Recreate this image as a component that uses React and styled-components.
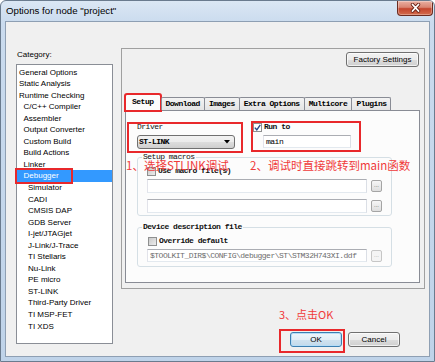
import React from 'react';
import styled, { createGlobalStyle } from 'styled-components';

const ui = `'Liberation Sans', Arial, sans-serif`;
const mono = `'Liberation Mono', 'Courier New', monospace`;
const cjk = `'Noto Sans CJK SC', 'Noto Sans', sans-serif`;

const GlobalStyle = createGlobalStyle`
  body { margin: 0; background: #fff; }
  * { box-sizing: border-box; }
`;

const categories = [
  ['General Options', 0], ['Static Analysis', 0], ['Runtime Checking', 0],
  ['C/C++ Compiler', 1], ['Assembler', 1], ['Output Converter', 1], ['Custom Build', 1],
  ['Build Actions', 1], ['Linker', 1], ['Debugger', 1], ['Simulator', 2], ['CADI', 2],
  ['CMSIS DAP', 2], ['GDB Server', 2], ['I-jet/JTAGjet', 2], ['J-Link/J-Trace', 2],
  ['TI Stellaris', 2], ['Nu-Link', 2], ['PE micro', 2], ['ST-LINK', 2],
  ['Third-Party Driver', 2], ['TI MSP-FET', 2], ['TI XDS', 2],
];

const tabs = ['Setup', 'Download', 'Images', 'Extra Options', 'Multicore', 'Plugins'];

const Window = styled.div`
  width: 435px;
  height: 362px;
  border: 1px solid #6a7b8e;
  border-radius: 6px 6px 0 0;
  background: linear-gradient(180deg, #dbe7f4 0px, #cadbee 22px, #bfd3e9 100%);
  padding: 0 4px 4px;
  display: flex;
  flex-direction: column;
  overflow: hidden;
`;

const TitleBar = styled.div`
  height: 20px;
  display: flex;
  align-items: flex-start;
`;

const Title = styled.div`
  padding-left: 1px;
  font: 9.7px/20px ${ui};
  color: #000;
`;

const CloseButton = styled.div`
  margin-left: auto;
  margin-right: -3px;
  width: 36px;
  height: 15px;
  border: 1px solid #6b2b20;
  border-top: none;
  border-radius: 0 0 4px 4px;
  background: linear-gradient(#eab0a2, #d98471 45%, #c4452d 55%, #d36c4d);
  box-shadow: inset 0 0 0 1px rgba(255, 255, 255, 0.3);
  display: flex;
  align-items: center;
  justify-content: center;
`;

const Client = styled.div`
  flex: 1;
  background: #f0f0f0;
  border: 1px solid #8e9fb3;
  display: grid;
  grid-template-columns: 97px 304px;
  column-gap: 8px;
  align-items: start;
  padding: 26px 0 0 10px;
`;

const LeftCol = styled.div`
  display: flex;
  flex-direction: column;
`;

const CategoryLabel = styled.div`
  margin: 2px 0 4px 1px;
  font: 8px/10px ${ui};
  color: #000;
`;

const ListBox = styled.div`
  height: 280px;
  background: #fff;
  border: 1px solid #8a8e96;
  padding-top: 1.5px;
`;

const ListItem = styled.div`
  position: relative;
  height: 11.55px;
  line-height: 11.55px;
  padding-left: ${(p) => 2 + p.$level * 4.5}px;
  font-family: ${ui};
  font-size: 8px;
  white-space: nowrap;
  color: ${(p) => (p.$selected ? '#fff' : '#000')};
  background: ${(p) => (p.$selected ? '#3399ff' : 'transparent')};
`;

const Mark = styled.span`
  position: absolute;
  left: ${(p) => p.$l}px;
  top: ${(p) => p.$t}px;
  width: ${(p) => p.$w}px;
  height: ${(p) => p.$h}px;
  border: 2px solid #e8282b;
  pointer-events: none;
  z-index: 3;
`;

const RightCol = styled.div`
  display: flex;
  flex-direction: column;
`;

const OuterBox = styled.div`
  height: 241px;
  border: 1px solid #a0a0a0;
  padding: 3px 4px 0 3px;
  display: flex;
  flex-direction: column;
`;

const FactoryRow = styled.div`
  display: flex;
  justify-content: flex-end;
  padding-right: 1px;
`;

const Button = styled.div`
  width: ${(p) => p.$w || 52}px;
  height: 15px;
  border: 1px solid ${(p) => (p.$default ? '#3c7fb1' : '#707070')};
  border-radius: 3px;
  background: ${(p) =>
    p.$default
      ? 'linear-gradient(#eef6fb 0%, #e2eef7 50%, #d0e3f0 51%, #c3d9ea 100%)'
      : 'linear-gradient(#f2f2f2 0%, #ebebeb 50%, #dddddd 51%, #cfcfcf 100%)'};
  box-shadow: inset 0 0 0 1px ${(p) => (p.$default ? '#b6ddf7' : 'rgba(255,255,255,0.7)')};
  font: 8px/13px ${ui};
  color: #000;
  text-align: center;
  white-space: nowrap;
`;

const TabRow = styled.div`
  margin-top: 27px;
  height: 16px;
  display: flex;
  align-items: flex-end;
  position: relative;
  z-index: 1;
`;

const Tab = styled.div`
  height: ${(p) => (p.$active ? 17 : 13)}px;
  margin-bottom: ${(p) => (p.$active ? -1 : 0)}px;
  padding: ${(p) => (p.$active ? '1px 6px 0' : '0 4px')};
  border: 1px solid #898c95;
  border-bottom: none;
  border-radius: 2px 2px 0 0;
  background: ${(p) => (p.$active ? '#fcfcfc' : 'linear-gradient(#f3f3f3, #e4e4e4)')};
  font: bold 8px/11px ${mono};
  letter-spacing: -0.5px;
  color: #000;
  white-space: nowrap;
  outline: ${(p) => (p.$marked ? '2px solid #e8282b' : 'none')};
  outline-offset: -1px;
  &:nth-child(n + 3) {
    margin-left: -1px;
  }
`;

const TabPage = styled.div`
  position: relative;
  width: 295px;
  height: 173px;
  border: 1px solid #898c95;
  background: #fcfcfc;
  padding: 11px 0 0 11px;
`;

const TopRow = styled.div`
  display: flex;
  align-items: flex-start;
`;

const DriverCol = styled.div`
  width: 98px;
`;

const RunToCol = styled.div`
  margin-left: 18px;
`;

const FieldLabel = styled.div`
  font: ${(p) => (p.$bold ? 'bold' : 'normal')} 8px/10px ${mono};
  letter-spacing: -0.5px;
  color: #111;
  white-space: nowrap;
`;

const Combo = styled.div`
  margin-top: 3px;
  height: 14px;
  border: 1px solid #707070;
  border-radius: 3px;
  background: linear-gradient(#f2f2f2 0%, #ebebeb 50%, #dddddd 51%, #cfcfcf 100%);
  display: flex;
  align-items: center;
  justify-content: space-between;
  padding: 0 4px 0 1px;
  font: bold 8px/12px ${mono};
  letter-spacing: -0.5px;
  color: #000;
`;

const CheckRow = styled.div`
  display: flex;
  align-items: center;
  gap: 2px;
  height: 10px;
  margin: ${(p) => p.$mt || 0}px 0 0 ${(p) => p.$ml || 0}px;
`;

const Checkbox = styled.span`
  width: 9px;
  height: 9px;
  border: 1px solid #8e8f8f;
  background: ${(p) => (p.$checked ? '#fff' : 'linear-gradient(135deg, #c9c9c9, #ececec)')};
  display: inline-flex;
  align-items: center;
  justify-content: center;
  flex: none;
`;

const TextInput = styled.div`
  width: ${(p) => p.$w}px;
  height: ${(p) => p.$h}px;
  margin-left: ${(p) => p.$ml || 0}px;
  margin-top: ${(p) => p.$mt || 0}px;
  border: 1px solid;
  border-color: #abadb3 #dbdfe6 #e3e9ef #e2e3ea;
  background: #fff;
  padding-left: 2px;
  font: 8px/${(p) => p.$h - 2}px ${mono};
  letter-spacing: -0.5px;
  color: ${(p) => (p.$disabled ? '#6d6d6d' : '#000')};
  white-space: nowrap;
  overflow: hidden;
`;

const PathRow = styled.div`
  display: flex;
  align-items: center;
  margin: ${(p) => p.$mt}px 0 0 9px;
`;

const Browse = styled.div`
  width: 11px;
  height: 12px;
  margin-left: 4px;
  border: 1px solid ${(p) => (p.$disabled ? '#c6c6c6' : '#a5a5a5')};
  border-radius: 2px;
  background: ${(p) => (p.$disabled ? '#f4f4f4' : 'linear-gradient(#f6f6f6, #dedede)')};
  font: 6px/9px ${ui};
  color: ${(p) => (p.$disabled ? '#a0a0a0' : '#555')};
  text-align: center;
`;

const GroupBox = styled.fieldset`
  margin: ${(p) => p.$mt}px 0 0;
  padding: 0 0 ${(p) => p.$pb}px;
  width: 255px;
  min-width: 0;
  border: 1px solid #d5dfe5;
  border-radius: 3px;
`;

const Legend = styled.legend`
  margin-left: 4px;
  padding: 0 1px;
  font: ${(p) => (p.$bold ? 'bold' : 'normal')} 8px/10px ${mono};
  letter-spacing: -0.5px;
  color: #111;
`;

const RedNote = styled.div`
  position: absolute;
  left: ${(p) => p.$l}px;
  top: ${(p) => p.$t}px;
  font: 11.5px/14px ${cjk};
  color: #f03a3a;
  white-space: nowrap;
  z-index: 2;
`;

const NoteLine = styled.div`
  margin-top: 18px;
  padding-left: 158px;
  font: 11px/14px ${cjk};
  color: #f03a3a;
`;

const ButtonRow = styled.div`
  margin-top: 11px;
  display: flex;
  justify-content: flex-end;
  gap: 6px;
  padding-right: 25px;
`;

const OkWrap = styled.div`
  position: relative;
`;

const CheckMark = () => (
  <svg width="7" height="7" viewBox="0 0 7 7">
    <path d="M0.8 3.6 L2.8 5.8 L6.3 0.8" fill="none" stroke="#24488a" strokeWidth="1.4" />
  </svg>
);

const ComboArrow = () => (
  <svg width="6" height="4" viewBox="0 0 6 4">
    <path d="M0 0 H6 L3 3.5 Z" fill="#000" />
  </svg>
);

const CloseGlyph = () => (
  <svg width="11" height="10" viewBox="0 0 11 10">
    <path d="M2.5 1.5 L8.5 8 M8.5 1.5 L2.5 8" stroke="#6a2418" strokeWidth="3.4" strokeLinecap="round" />
    <path d="M2.5 1.5 L8.5 8 M8.5 1.5 L2.5 8" stroke="#fff" strokeWidth="1.8" strokeLinecap="round" />
  </svg>
);

const App = () => {
  return (
    <>
      <GlobalStyle />
      <Window>
        <TitleBar>
          <Title>Options for node "project"</Title>
          <CloseButton>
            <CloseGlyph />
          </CloseButton>
        </TitleBar>

        <Client>
          <LeftCol>
            <CategoryLabel>Category:</CategoryLabel>
            <ListBox>
              {categories.map(([name, level]) => (
                <ListItem key={name} $level={level} $selected={name === 'Debugger'}>
                  {name}
                  {name === 'Debugger' && <Mark $l={-2} $t={-2.5} $w={58} $h={16} />}
                </ListItem>
              ))}
            </ListBox>
          </LeftCol>

          <RightCol>
            <OuterBox>
              <FactoryRow>
                <Button $w={73}>Factory Settings</Button>
              </FactoryRow>

              <TabRow>
                {tabs.map((t, i) => (
                  <Tab key={t} $active={i === 0} $marked={i === 0}>
                    {t}
                  </Tab>
                ))}
              </TabRow>

              <TabPage>
                <TopRow>
                  <DriverCol>
                    <FieldLabel>Driver</FieldLabel>
                    <Combo>
                      <span>ST-LINK</span>
                      <ComboArrow />
                    </Combo>
                  </DriverCol>
                  <RunToCol>
                    <CheckRow>
                      <Checkbox $checked>
                        <CheckMark />
                      </Checkbox>
                      <FieldLabel $bold>Run to</FieldLabel>
                    </CheckRow>
                    <TextInput $w={88} $h={13} $ml={10} $mt={3}>main</TextInput>
                  </RunToCol>
                </TopRow>

                <GroupBox $mt={3} $pb={2}>
                  <Legend>Setup macros</Legend>
                  <CheckRow $mt={4} $ml={9}>
                    <Checkbox />
                    <FieldLabel $bold>Use macro file(s)</FieldLabel>
                  </CheckRow>
                  <PathRow $mt={3}>
                    <TextInput $w={220} $h={14} />
                    <Browse>...</Browse>
                  </PathRow>
                  <PathRow $mt={6}>
                    <TextInput $w={220} $h={14} />
                    <Browse>...</Browse>
                  </PathRow>
                </GroupBox>

                <GroupBox $mt={6} $pb={4}>
                  <Legend $bold>Device description file</Legend>
                  <CheckRow $mt={4} $ml={10}>
                    <Checkbox />
                    <FieldLabel $bold>Override default</FieldLabel>
                  </CheckRow>
                  <PathRow $mt={3}>
                    <TextInput $w={220} $h={13} $disabled>
                      $TOOLKIT_DIR$\CONFIG\debugger\ST\STM32H743XI.ddf
                    </TextInput>
                    <Browse $disabled>...</Browse>
                  </PathRow>
                </GroupBox>

                <Mark $l={1} $t={11} $w={116} $h={31} />
                <Mark $l={125} $t={10} $w={110} $h={31} />
                <RedNote $l={0} $t={47}>1、选择STLINK调试</RedNote>
                <RedNote $l={124} $t={47}>2、调试时直接跳转到main函数</RedNote>
              </TabPage>
            </OuterBox>

            <NoteLine>3、点击OK</NoteLine>

            <ButtonRow>
              <OkWrap>
                <Button $default>OK</Button>
                <Mark $l={-11} $t={-3} $w={66} $h={24} />
              </OkWrap>
              <Button>Cancel</Button>
            </ButtonRow>
          </RightCol>
        </Client>
      </Window>
    </>
  );
};

export default App;
